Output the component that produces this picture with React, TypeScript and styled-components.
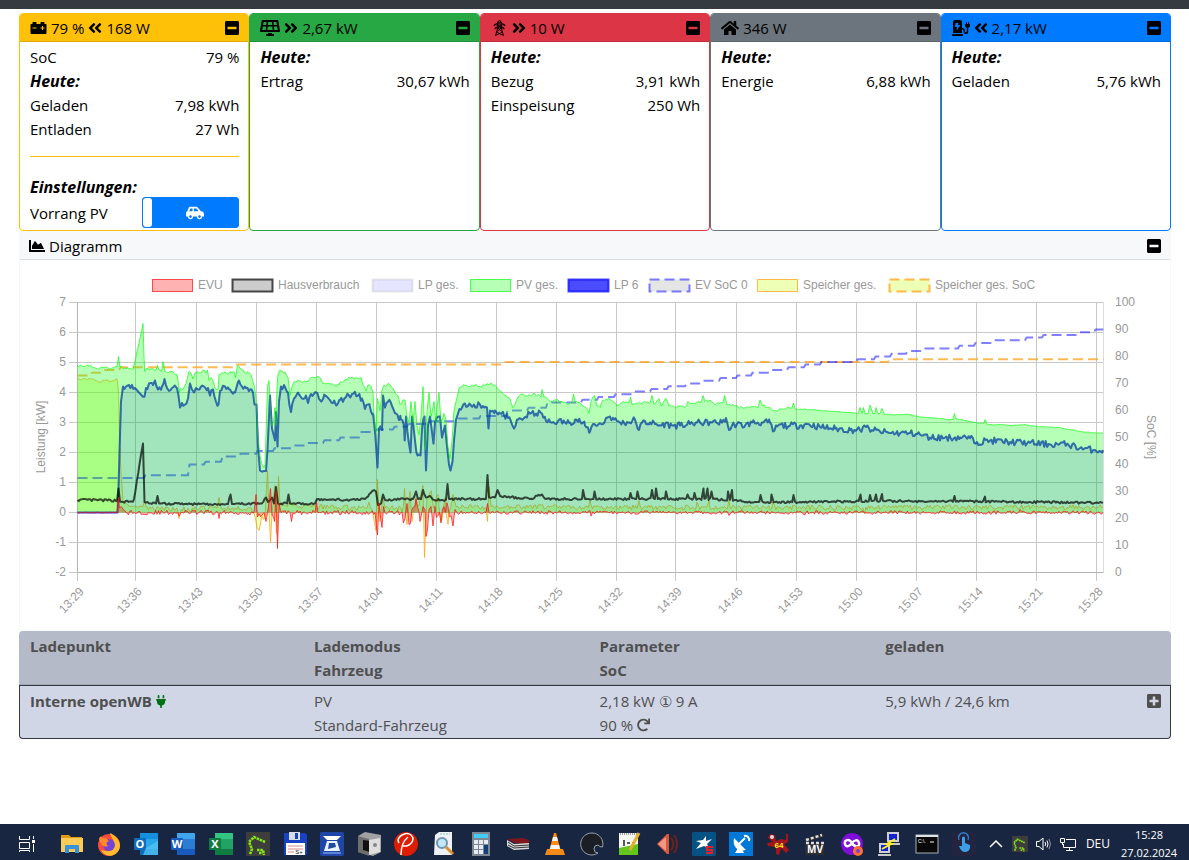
import React from "react";
import styled, { createGlobalStyle } from "styled-components";
import {
  FaAngleDoubleLeft,
  FaAngleDoubleRight,
  FaCarBattery,
  FaCarSide,
  FaChargingStation,
  FaChartArea,
  FaHome,
  FaMinusSquare,
  FaPlug,
  FaPlusSquare,
  FaRedo,
  FaSolarPanel,
} from "react-icons/fa";

const GlobalStyle = createGlobalStyle`
  *, *::before, *::after { box-sizing: border-box; }
  body {
    margin: 0;
    background: #fff;
    color: #000;
    font: 15px/24px "Segoe UI", "Open Sans", "Noto Sans", sans-serif;
  }
  button { border: 0; padding: 0; background: none; color: inherit; font: inherit; cursor: pointer; }
`;

const Page = styled.div`
  min-height: 100vh;
  display: flex;
  flex-direction: column;
`;

const NavBar = styled.header`
  height: 9px;
  background: #343a40;
`;

const Main = styled.main`
  padding: 4px 18px 24px 19px;
`;

const CardDeck = styled.section`
  display: grid;
  grid-template-columns: repeat(5, 1fr);
`;

const Card = styled.article<{ $tone: string }>`
  display: flex;
  flex-direction: column;
  border: 1px solid ${(p) => p.$tone};
  border-radius: 4px;
  overflow: hidden;
`;

const CardHeader = styled.header<{ $tone: string }>`
  display: flex;
  align-items: center;
  justify-content: space-between;
  height: 28px;
  padding: 0 9px 0 10px;
  background: ${(p) => p.$tone};
  border-bottom: 1px solid rgba(0, 0, 0, 0.125);
`;

const HeaderTitle = styled.div`
  display: flex;
  align-items: center;
  gap: 4px;
  white-space: nowrap;
`;

const Icon = styled.span<{ $w: number }>`
  display: inline-flex;
  svg {
    width: ${(p) => p.$w}px;
    height: 16px;
  }
`;

const CollapseButton = styled.button`
  display: flex;
  svg {
    width: 14px;
    height: 16px;
  }
`;

const CardBody = styled.div`
  padding: 3px 9px 2px 10px;
`;

const Line = styled.div`
  display: flex;
  justify-content: space-between;
  align-items: center;
`;

const Subheading = styled.h2<{ $tight?: boolean }>`
  margin: 0;
  font-size: 16px;
  line-height: ${(p) => (p.$tight ? 20 : 24)}px;
  font-weight: 700;
  font-style: italic;
`;

const Divider = styled.hr`
  margin: 15px 0 20px;
  border: 0;
  border-top: 1px solid #ffc107;
`;

const Toggle = styled.span`
  position: relative;
  display: flex;
  width: 97px;
  height: 31px;
  border: 1px solid #007bff;
  border-radius: 3px;
  background: #007bff;
  overflow: hidden;
  color: #fff;
  input {
    position: absolute;
    inset: 0;
    margin: 0;
    width: 100%;
    height: 100%;
    opacity: 0;
    cursor: pointer;
  }
`;

const ToggleHandle = styled.span`
  width: 9px;
  border-radius: 3px;
  background: #fff;
`;

const ToggleFace = styled.span`
  flex: 1;
  display: flex;
  align-items: center;
  justify-content: center;
`;

const ChartCard = styled.section`
  border: 1px solid #f7f7f7;
  border-top: 0;
`;

const ChartHeader = styled.header`
  display: flex;
  align-items: center;
  justify-content: space-between;
  height: 29px;
  padding: 2px 9px 0;
  background: #f7f8fa;
  border-bottom: 1px solid #dcdee0;
`;

const ChartSvg = styled.svg`
  display: block;
  width: 100%;
  height: auto;
  font: 12px "Liberation Sans", Arial, sans-serif;
  fill: #999;
`;

const PointTable = styled.table`
  width: 100%;
  table-layout: fixed;
  border-spacing: 0;
  color: #4f4f4f;
  text-align: left;
  th, td { vertical-align: top; padding: 3px 0 1px; }
  th:first-child, td:first-child { padding-left: 11px; width: 25.6%; }
  th { width: 24.8%; }
`;

const HeadRow = styled.tr`
  th {
    padding-bottom: 2px;
    background: #b5bac9;
    border-bottom: 1px solid #a3a7b5;
  }
  th:first-child { border-top-left-radius: 4px; }
  th:last-child { border-top-right-radius: 4px; }
`;

const PointRow = styled.tr`
  th, td {
    background: #d0d6e6;
    border-top: 1px solid #343a40;
    border-bottom: 1px solid #343a40;
  }
  && > :first-child { border-left: 1px solid #343a40; border-bottom-left-radius: 4px; padding-left: 10px; }
  && > :last-child { border-right: 1px solid #343a40; border-bottom-right-radius: 4px; padding-right: 9px; }
`;

const CellLine = styled.div`
  display: flex;
  align-items: center;
  gap: 4px;
`;

const SplitCell = styled.div`
  display: flex;
  justify-content: space-between;
  align-items: center;
`;

const PlugMark = styled.span`
  display: inline-flex;
  color: #006e12;
  svg { width: 10px; height: 13px; }
`;

const TaskBar = styled.footer`
  display: flex;
  align-items: center;
  height: 36px;
  margin-top: auto;
  padding: 4px 9px 0 15px;
  background: #192642;
  color: #fff;
  font-size: 12px;
`;

const AppList = styled.nav`
  flex: 0 1 916px;
  display: flex;
  justify-content: space-between;
  margin-left: 21px;
`;

const TaskButton = styled.button`
  display: flex;
  svg { width: 24px; height: 24px; }
`;

const Tray = styled.div`
  display: flex;
  align-items: center;
  gap: 8px;
  margin-left: auto;
`;

const TrayIcon = styled.button`
  display: flex;
  svg { width: 16px; height: 16px; }
`;

const Language = styled.span`
  margin-left: 2px;
`;

const Clock = styled.time`
  width: 62px;
  font-size: 11px;
  line-height: 18px;
  text-align: center;
`;

/* ---------- chart ---------- */

const LEFT = 77.5;
const RIGHT = 1103.5;
const TOP = 302.5;
const BOTTOM = 572.5;
const kwY = (v: number) => 512.5 - v * 30;
const socY = (v: number) => BOTTOM - v * 2.7;

const random = (seed: number) => {
  let s = seed;
  return () => {
    s = (s * 16807) % 2147483647;
    return s / 2147483647 - 0.5;
  };
};

// Samples arrive every ten seconds; flat pairs are x, kW.
const STEP = 1.43;
function samples(flat: number[], noise: number, seed: number, spikes: number[] = []) {
  const rnd = random(seed);
  const out: [number, number][] = [];
  for (let i = 0; i + 3 < flat.length; i += 2) {
    const [x0, y0, x1, y1] = flat.slice(i, i + 4);
    out.push([x0, y0]);
    for (let x = x0 + STEP; x < x1 - 0.7; x += STEP) {
      out.push([x, y0 + ((y1 - y0) * (x - x0)) / (x1 - x0) + rnd() * 2 * noise]);
    }
  }
  out.push([flat[flat.length - 2], flat[flat.length - 1]]);
  for (let i = 0; i < spikes.length; i += 2) {
    const near = out.reduce((b, p, k) => (Math.abs(p[0] - spikes[i]) < Math.abs(out[b][0] - spikes[i]) ? k : b), 0);
    out[near] = [spikes[i], spikes[i + 1]];
  }
  return out;
}
const toPath = (pts: [number, number][]) =>
  "M" + pts.map(([x, y]) => x.toFixed(1) + " " + kwY(y).toFixed(1)).join("L");
const toArea = (pts: [number, number][]) =>
  toPath(pts) + `L${pts[pts.length - 1][0]} ${kwY(0)}L${pts[0][0]} ${kwY(0)}Z`;

const pv = samples([
  77.5, 4.9, 82, 4.88, 90, 4.9, 93, 4.83, 98, 4.77, 103, 4.85, 108, 4.82, 111, 4.8, 117, 4.85, 118.5, 5.2, 120, 4.85,
  126, 4.8, 133, 4.77, 135.5, 5.1, 139, 5.65, 143, 6.3, 144, 5.2, 144.7, 4.7, 147, 4.8, 152, 4.8, 156, 4.75, 157.5, 4.9,
  159, 4.75, 161.5, 4.7, 163, 5.03, 165, 4.7, 168, 4.65, 171, 4.7, 174, 4.65, 177, 4.6, 178.5, 4.3, 179.5, 4, 180.5, 4.15,
  183, 4.1, 186, 4.3, 189, 4.7, 191, 4.65, 193, 4.45, 195, 4.65, 198, 4.7, 201, 4.65, 203, 4.75, 206, 4.65, 207.5, 4.75,
  209, 4.4, 211, 4.5, 213, 4.4, 215, 4.15, 218, 4.1, 219, 4.6, 222, 4.65, 225, 4.68, 228, 4.6, 230, 4.7, 232, 4.65,
  234, 4.7, 235.5, 4.5, 237.5, 4.9, 240, 4.8, 243, 4.75, 245, 4.65, 248, 4.7, 251, 4.6, 252.5, 4.4, 254.5, 4.2, 256, 3.8,
  257, 3.2, 258, 2.5, 260, 1.9, 262, 1.6, 264, 1.5, 265, 1.6, 266, 2.6, 267.5, 4.2, 269, 4.4, 270.5, 3.5, 271.5, 2.9,
  273.5, 3, 275, 3.5, 276, 2.9, 277, 4.2, 278, 4.6, 280, 4.75, 282, 4.7, 285, 4.68, 288, 4.5, 290, 3.9, 292, 4.2,
  294, 4.35, 298, 4.4, 303, 4.35, 308, 4.35, 311, 4.5, 320, 4.5, 323, 4.3, 327, 4.3, 332, 4.3, 336, 4.2, 341, 4.35,
  346, 4.45, 351, 4.5, 358, 4.48, 361, 4.5, 363, 4.25, 366, 4.05, 368, 4.25, 371, 4.2, 373, 4, 374, 3.3, 376, 2.7,
  377.5, 3.8, 380, 3.4, 382, 4.1, 384, 4.25, 386, 4.2, 388, 4.3, 391, 4.2, 395, 4, 398, 3.9, 400, 3.6, 403, 3.75,
  405, 3.75, 407, 3.2, 409, 3, 411, 3.7, 413, 3, 415, 3.7, 417, 2.9, 419, 2.6, 421, 3.2, 423, 4.2, 424.5, 2.8, 425.5, 2.1,
  427, 3.4, 429, 4, 431, 3.2, 434, 3.7, 436, 3, 437, 3.5, 439, 4, 441, 3, 444, 3.3, 446, 3.1, 448, 2.2, 450, 1.8,
  452, 2.4, 454, 3.4, 456, 3.7, 459, 4.15, 464, 4.25, 470, 4.2, 475, 4.25, 480, 4.2, 486, 4.25, 490, 4.3, 496, 4.2,
  498, 4.1, 502, 4, 506, 3.9, 510, 3.8, 513, 3.5, 515, 3.6, 518, 3.85, 522, 3.95, 526, 3.9, 530, 3.9, 535, 3.95,
  541, 3.85, 542, 4.1, 544, 3.85, 550, 3.7, 556, 3.75, 562, 3.7, 568, 3.6, 572, 3.7, 573.5, 3.95, 575, 3.7, 580, 3.65,
  586, 3.5, 589, 3.3, 591, 3.7, 594.5, 3.9, 597, 3.55, 600, 3.5, 603, 3.75, 609, 3.8, 613, 3.7, 617, 3.55, 623, 3.7,
  629, 3.65, 630.5, 3.85, 632, 3.6, 640, 3.65, 645, 3.7, 650, 3.65, 652, 3.9, 654, 3.6, 659, 3.8, 661, 3.55, 666, 3.8,
  669, 3.55, 675, 3.5, 679, 3.55, 685, 3.5, 688, 3.7, 692, 3.65, 698, 3.7, 701, 3.65, 703, 3.9, 705, 3.7, 710, 3.75,
  715, 3.6, 720, 3.65, 723, 3.65, 724.5, 3.9, 727, 3.6, 733, 3.6, 738, 3.5, 745, 3.5, 752, 3.55, 758, 3.5, 760, 3.75,
  763, 3.55, 770, 3.5, 775, 3.4, 785, 3.45, 792, 3.48, 793.5, 3.65, 795, 3.45,
], 0.04, 7).concat(samples([
  796, 3.45, 810, 3.43, 830, 3.38, 845, 3.34, 858, 3.3, 860, 3.5, 862, 3.3, 863.5, 3.5, 865, 3.3, 868, 3.3, 870, 3.58,
  873, 3.3, 875, 3.3, 876, 3.5, 878, 3.3, 880, 3.3, 882, 3.47, 884, 3.28, 892, 3.25, 908, 3.28, 920, 3.18, 935, 3.15,
  948, 3.1, 953, 3.1, 954.5, 3.3, 956, 3.12, 968, 3.05, 978, 2.98, 984, 2.97, 985, 3.1, 987, 2.93, 1000, 2.93,
  1012, 2.9, 1025, 2.93, 1035, 2.87, 1050, 2.85, 1060, 2.83, 1080, 2.7, 1095, 2.65, 1103, 2.65,
], 0.012, 9));

const lp = samples([77.5, 0, 117.5, 0], 0, 3).concat(samples([
  118.5, 0.8, 119.5, 2, 121, 3.7, 123, 4.2, 126, 4.2, 129, 4.25, 135, 4.15], 0.08, 4)).concat([[139, 4], [143, 3.86], [144.5, 3.86]], samples([
  146, 4.15, 149, 4.3, 153, 4.25, 155, 4.4, 158, 4.1, 162, 4.2, 164.5, 4.45, 167, 4.15, 169, 4.05, 172, 4.15, 177, 4.15,
  178.5, 3.9, 180, 3.5, 182, 3.65, 185, 3.6, 188, 3.8, 190, 4.3, 192, 4.1, 194, 4, 196, 4.15, 198, 4.1, 201, 4.2,
  204, 4.2, 208, 4.15, 210, 3.9, 213, 4.1, 216, 3.7, 218.5, 3.6, 220, 4.05, 225, 4.2, 230, 4.1, 235, 4, 239, 4.4,
  242, 4.2, 246, 4.15, 250, 4.1, 253, 4, 254.5, 3.6, 256.5, 3.6, 258, 2.2, 260, 1.4], 0.1, 5)).concat(samples([
  261, 1.38, 266, 1.38, 267.5, 2.1, 270, 3.9, 272, 2.8, 275, 2.4, 276, 3.35, 277.5, 2.2, 279, 3.7], 0.02, 5)).concat(samples([
  281, 4.2, 284, 4.25, 288, 4, 291, 3.35, 294, 3.8, 298, 4, 302, 3.8, 306, 3.9, 308, 3.65, 311, 3.95, 316, 4, 320, 3.75,
  325, 3.9, 330, 3.75, 335, 3.65, 340, 3.75, 346, 3.85, 352, 3.95, 358, 3.9, 362, 3.8, 365, 3.45, 368, 3.6, 373, 3.3,
  375.5, 2.5, 377.5, 1.5, 379, 2.8, 382, 2.75, 383, 3.9, 385, 3.5, 388, 3.7, 392, 3.55, 396, 3.3, 401, 3.1, 404, 2.9,
  404.7, 2.4, 406, 3.2, 408.5, 2.4, 410.5, 2, 412, 3.2, 415, 2.4, 417.5, 1.9, 420.5, 1.9, 422, 2.8, 424.5, 3.2, 426, 1.4,
  428, 2.9, 430, 3.2, 433.5, 2.3, 435, 3, 438, 3.2, 440, 3.2, 442, 2.5, 445, 2.9, 447, 2.2, 449, 1.6, 450.5, 1.4,
  452.5, 1.7, 454, 2.4, 456, 3.1, 458, 3.3, 462, 3.5, 468, 3.55, 474, 3.6, 480, 3.6, 483, 3.55, 487, 3.5, 488.5, 2.8,
  490, 3.4, 495, 3.4, 500, 3.3, 504, 3.25, 508, 3.15, 514, 2.8, 518, 3.1, 524, 3.15, 530, 3.3, 536, 3.3, 542, 3.3,
  546, 3.05, 552, 3, 558, 3.05, 565, 3, 570, 3, 575, 3.1, 580, 3.05, 585, 2.9, 590, 2.7, 593, 2.95, 603, 2.95,
  606, 3.15, 610, 3.2, 614, 3.1, 620, 3, 628, 3, 635, 3.1, 639, 2.75, 642, 3, 650, 3, 655, 2.95, 660, 2.9, 665, 2.95,
  672, 2.9, 680, 2.9, 690, 2.95, 700, 3, 712, 3, 722, 3, 726, 3.15, 729, 2.75, 734, 2.95, 745, 2.9, 752, 3, 762, 3,
  770, 3, 773, 2.7, 778, 2.9, 790, 2.9, 800, 2.9, 808, 2.95, 820, 2.85, 835, 2.8, 850, 2.75, 860, 2.75, 866, 2.85,
  872, 2.75, 880, 2.7, 890, 2.65, 910, 2.65, 920, 2.6, 930, 2.5, 945, 2.5, 960, 2.5, 970, 2.48, 977, 2.35, 990, 2.4,
  1010, 2.35, 1030, 2.32, 1050, 2.27, 1068, 2.28, 1080, 2.15, 1095, 2.08, 1103, 2.08,
], 0.11, 11));

const house = samples([
  77.5, 0.42, 117, 0.4, 118.5, 0.8, 120, 0.36, 133, 0.36,
], 0.04, 13).concat(samples([
  134, 0.45, 143, 2.3, 144.5, 0.35, 156, 0.3, 157.5, 0.55, 159, 0.3, 190, 0.28, 228, 0.28, 230.5, 0.6, 232, 0.28, 262, 0.3, 266, 0.5,
  268, 0.35, 272, 0.5, 274, 0.3, 276, 0.85, 278, 0.3, 287, 0.3, 288.5, 0.6, 290, 0.3, 315, 0.3, 317, 0.45, 350, 0.42, 365, 0.45,
  374, 0.75, 376, 0.7, 378, 0.25, 381, 0.3, 383, 0.6, 385, 0.42, 413, 0.45, 416, 0.7, 418, 0.45, 421, 0.45, 423, 0.75,
  426, 0.5, 430, 0.55, 434, 0.42, 446, 0.42, 447.5, 0.95, 449, 0.45, 486, 0.45, 487.5, 1.25, 489, 0.5, 495, 0.5,
  497.5, 0.75, 500, 0.55, 530, 0.45, 542, 0.6, 546, 0.45, 582, 0.45, 700, 0.45, 735, 0.42, 745, 0.34, 800, 0.35,
  880, 0.38, 980, 0.37, 1103, 0.32,
], 0.035, 15, [
  583, 0.75, 594.5, 0.7, 630.5, 0.65, 637.5, 0.7, 652, 0.75, 656, 0.8, 666, 0.7, 687.5, 0.6, 694.5, 0.65, 703.5, 0.8,
  707.5, 0.8, 711.5, 0.7, 728, 0.7, 732, 0.75, 760.5, 0.58, 771.5, 0.6, 793.5, 0.58, 860.5, 0.6, 870, 0.58, 876, 0.6,
  882, 0.62, 954.5, 0.55, 985, 0.53,
]));

const battery = samples([
  77.5, 4.5, 79, 4.44, 86, 4.45, 93, 4.45, 98, 4.35, 101, 4.33, 103, 4.42, 108, 4.4, 111, 4.37, 117, 4.45, 118.5, 4,
  119.5, 2.5, 121, 1.3, 123, 0.4, 130, 0.2, 143, 0.2, 144.5, 0.4, 146, 0.2], 0.02, 17).concat(samples([
  147, 0.2, 160, 0.1, 177, 0.15, 179, -0.2, 181, 0.1, 217, 0.15, 219, 0.5, 221, 0.15, 250, 0.15, 254, 0, 257, -0.5, 259, -0.6,
  262, -0.1, 265, -0.2, 267.5, 1.4, 270.5, -1, 272, 0, 275, 0.9, 276.5, -0.7, 278.5, 1.2, 280, 0.3, 300, 0.2, 367, 0.15,
  369, 0.35, 372, 0.1], 0.09, 19)).concat(samples([
  376, -0.6, 377.5, 1.1, 380, -0.3, 383, 0.5, 385, 0.15, 401, 0.15], 0.08, 21)).concat(samples([
  402, 0, 404.5, 0.8, 407, -0.4, 410, 0.7, 412, -0.3, 416, 0.5, 420, 0.4, 423, 0.9, 424.5, -1.5, 427, 0.5, 432, 0.5,
  435, 0.2, 438, 0.6, 441, -0.3, 445, 0.5, 448, -0.4, 451, 0.2, 453, 0.6, 456, 0.2], 0.25, 23)).concat(samples([
  458, 0.2, 486, 0.15, 487.5, -0.3, 489, 0.85, 491, 0.2, 600, 0.17, 850, 0.17, 1103, 0.18,
], 0.08, 25, [590, 0.4, 639, 0.4, 697, 0.35, 709, 0.4, 729, 0.4, 773, 0.35, 865, -0.03]));

const grid = samples([
  77.5, 0, 117, 0, 118.5, 0.5, 119.5, 0.15, 121, 0.2, 126, 0], 0.02, 27).concat(samples([
  127, 0, 178, 0, 179, -0.12, 181, 0, 218, 0, 219, -0.2, 220, 0, 254, 0, 256, 0.6, 257.5, -0.15, 264, 0, 266, -0.3,
  268, 0.1, 270.5, 0.8, 272, -0.1, 274.5, -0.3, 276, 0.7, 277.5, -1.2, 279, 0.3, 281, 0, 290, 0, 291.5, -0.3, 293, 0,
  315, 0, 316.5, 0.35, 318, 0, 375, 0, 377.5, -0.75, 379, 0.3, 382, -0.5, 383.5, 0.2, 385, 0, 401, 0], 0.08, 29)).concat(samples([
  402, 0, 405, -0.2, 407, 0.3, 409, -0.4, 412, 0.1, 416, 0.45, 420, -0.3, 423, 0.2, 425, 0.1, 426, -0.8, 429, 0.1,
  431, 0.2, 433, -0.45, 435, 0.2, 438, -0.1, 441, -0.35, 444, 0.2, 448, 0.2, 451, -0.1, 453, -0.45, 455, 0.1], 0.25, 31)).concat(samples([
  457, 0, 486, 0, 487.5, 0.3, 489, 0, 500, 0, 700, 0, 1103, 0,
], 0.06, 33, [591, -0.12, 729, -0.1, 805, -0.08, 1020, 0.1]));

// x where each state of charge begins, followed by its per cent value
const evSoc = [
  77.5, 35, 144, 36, 188, 40, 204, 41, 221, 43, 239, 44, 256, 45, 273, 46, 290, 47, 306, 48, 323, 49, 339, 50, 359, 52,
  375, 53, 393, 54, 407, 55, 429, 56, 457, 57, 479, 58, 506, 60, 527, 61, 546, 63, 581, 64, 597, 65, 614, 66, 633, 67,
  650, 68, 667, 69, 685, 70, 702, 71, 719, 72, 736, 73, 751, 74, 770, 75, 787, 76, 804, 77, 820, 78, 856, 79, 874, 80,
  890, 81, 906, 82, 922, 83, 958, 84, 974, 85, 992, 86, 1025, 87, 1042, 88, 1077, 89, 1094, 90,
];
const batSoc = [77.5, 73, 88, 74, 101, 75, 119, 76, 233, 77, 503, 78, 888, 79];
const stepPath = (s: number[]) => {
  let d = `M${s[0]} ${socY(s[1])}`;
  for (let i = 2; i < s.length; i += 2) d += `L${s[i]} ${socY(s[i - 1])}L${s[i] + 1.5} ${socY(s[i + 1])}`;
  return d + `L${RIGHT} ${socY(s[s.length - 1])}`;
};

const legend = [
  { x: 152, label: "EVU", fill: "rgba(255,0,0,.3)", stroke: "rgba(255,10,13,.7)", w: 1 },
  { x: 232, label: "Hausverbrauch", fill: "rgba(0,0,0,.2)", stroke: "rgba(0,0,0,.7)", w: 2 },
  { x: 372, label: "LP ges.", fill: "rgba(0,0,255,.1)", stroke: "rgba(0,0,0,.08)", w: 2 },
  { x: 470, label: "PV ges.", fill: "rgba(10,255,13,.3)", stroke: "rgba(10,255,13,.7)", w: 1 },
  { x: 568, label: "LP 6", fill: "rgba(0,0,255,.7)", stroke: "rgba(0,0,255,.7)", w: 2 },
  { x: 649, label: "EV SoC 0", fill: "rgba(0,0,0,.1)", stroke: "rgba(0,0,255,.5)", w: 2, dash: "10 5" },
  { x: 757, label: "Speicher ges.", fill: "rgba(200,255,13,.3)", stroke: "rgba(255,155,13,.7)", w: 1 },
  { x: 889, label: "Speicher ges. SoC", fill: "rgba(200,255,13,.3)", stroke: "rgba(255,155,13,.7)", w: 2, dash: "10 5" },
];

const ticks: [number, string][] = [
  [77.5, "13:29"], [135.5, "13:36"], [196.5, "13:43"], [256.5, "13:50"], [316.5, "13:57"], [376.5, "14:04"],
  [436.5, "14:11"], [496.5, "14:18"], [556.5, "14:25"], [616.5, "14:32"], [675.5, "14:39"], [736.5, "14:46"],
  [796.5, "14:53"], [856.5, "15:00"], [916.5, "15:07"], [976.5, "15:14"], [1036.5, "15:21"], [1096.5, "15:28"],
];

function PowerChart() {
  return (
    <ChartSvg viewBox="20 260 1150 370" role="img" aria-label="Leistung und SoC im Tagesverlauf">
      {legend.map((l) => (
        <g key={l.label}>
          <rect x={l.x + 0.5} y="279.5" width="40" height="12" fill={l.fill} stroke={l.stroke} strokeWidth={l.w} strokeDasharray={l.dash} />
          <text x={l.x + 46} y="289">{l.label}</text>
        </g>
      ))}
      <g stroke="#c8c8c8" fill="none">
        {[7, 6, 5, 4, 3, 2, 1, 0, -1, -2].map((v) => (
          <path key={v} d={`M69 ${kwY(v)}H${RIGHT}`} />
        ))}
        {ticks.map(([x]) => (
          <path key={x} d={`M${x} ${TOP}V581`} />
        ))}
        <path d={`M${RIGHT} ${TOP}V${BOTTOM}`} stroke="#ddd" />
        <path d={`M${LEFT} ${TOP}V${BOTTOM}H${RIGHT}`} stroke="#b4b4b4" />
      </g>
      {[7, 6, 5, 4, 3, 2, 1, 0, -1, -2].map((v) => (
        <text key={v} x="66" y={kwY(v) + 3.5} textAnchor="end">{v}</text>
      ))}
      {[0, 10, 20, 30, 40, 50, 60, 70, 80, 90, 100].map((v) => (
        <text key={v} x="1115" y={socY(v) + 3.5}>{v}</text>
      ))}
      {ticks.map(([x, t]) => (
        <text key={t} textAnchor="end" transform={`translate(${x + 7} 592) rotate(-47)`}>{t}</text>
      ))}
      <text textAnchor="middle" transform="translate(45 437) rotate(-90)">Leistung [kW]</text>
      <text textAnchor="middle" transform="translate(1147 437) rotate(90)">SoC [%]</text>

      <g fill="none" strokeLinejoin="round">
        <path d={stepPath(batSoc)} stroke="rgba(255,155,13,.7)" strokeWidth="2" strokeDasharray="10 5" />
        <path d={toArea(battery)} fill="rgba(200,255,13,.3)" />
        <path d={toPath(battery)} stroke="rgba(255,155,13,.7)" />
        <path d={stepPath(evSoc)} stroke="rgba(0,0,255,.5)" strokeWidth="2" strokeDasharray="10 5" />
        <path d={toPath(lp)} stroke="rgba(0,0,255,.7)" strokeWidth="2" />
        <path d={toArea(pv)} fill="rgba(10,255,13,.3)" />
        <path d={toPath(pv)} stroke="rgba(10,255,13,.7)" />
        <path d={toArea(lp)} fill="rgba(0,0,255,.1)" />
        <path d={toPath(lp)} stroke="rgba(0,0,0,.1)" strokeWidth="2" />
        <path d={toPath(house)} stroke="rgba(0,0,0,.7)" strokeWidth="2" />
        <path d={toArea(grid)} fill="rgba(255,0,0,.3)" />
        <path d={toPath(grid)} stroke="rgba(255,10,13,.7)" />
      </g>
    </ChartSvg>
  );
}

/* ---------- top cards ---------- */

const Pylon = () => (
  <svg viewBox="0 0 14 18" fill="none" stroke="currentColor" strokeWidth="1">
    <path d="M5 5V2L7 .5 9 2V5M5 2.5H9M1 7V5.5L5 3.5H9L13 5.5V7M1 5.5H13M2 10.5V9L5 7.5H9L12 9V10.5M2 9H12M5 5V9L2.500 17.500M9 5V9L11.500 17.500M5 5L9 9M9 5L5 9M5 9L10.500 13.500M9 9L3.500 13.500M3.500 13.500L11.500 17.500M10.500 13.500L2.500 17.500" />
  </svg>
);

interface MeterProps {
  tone: string;
  icon: React.ReactNode;
  iconWidth: number;
  state?: string;
  flow?: "in" | "out";
  power: string;
  children: React.ReactNode;
}

function MeterCard({ tone, icon, iconWidth, state, flow, power, children }: MeterProps) {
  return (
    <Card $tone={tone}>
      <CardHeader $tone={tone}>
        <HeaderTitle>
          <Icon $w={iconWidth}>{icon}</Icon>
          {state && <span>{state}</span>}
          {flow && <Icon $w={14}>{flow === "in" ? <FaAngleDoubleLeft /> : <FaAngleDoubleRight />}</Icon>}
          <span>{power}</span>
        </HeaderTitle>
        <CollapseButton aria-label="Einklappen"><FaMinusSquare /></CollapseButton>
      </CardHeader>
      <CardBody>{children}</CardBody>
    </Card>
  );
}

const Value = ({ name, value }: { name: string; value: string }) => (
  <Line><span>{name}</span><span>{value}</span></Line>
);

/* ---------- task bar ---------- */

const office = (dark: string, mid: string, light: string, letter: string) => (
  <>
    <rect x="6" y="1" width="18" height="22" rx="1" fill={mid} />
    <path d="M6 1H23a1 1 0 0 1 1 1V7H6z" fill={light} />
    <path d="M6 17H24V22a1 1 0 0 1-1 1H6z" fill={dark} />
    <rect x="0" y="6" width="12" height="12" rx="1" fill={dark} />
    <text x="6" y="16" fontSize="11" fontWeight="700" fill="#fff" textAnchor="middle" fontFamily="Open Sans, sans-serif">{letter}</text>
  </>
);

const greenTrace = (
  <>
    <rect width="24" height="24" fill="#3d3d3b" />
    <path d="M19 10L8 5 3 10 6 17 4 22M11 18H17L18 23M13 21H17" fill="none" stroke="#83e813" strokeWidth="2.500" strokeDasharray="2.500 .8" />
  </>
);

const apps: [string, React.ReactNode][] = [
  ["Explorer", <>
    <path d="M1 3H9L11 5H22V8H1z" fill="#e09a10" /><path d="M1 6H23V20H1z" fill="#fccb57" />
    <path d="M5 14a1 1 0 0 1 1-1H18a1 1 0 0 1 1 1V21H15V17H9V21H5z" fill="#3892da" />
  </>],
  ["Firefox", <>
    <circle cx="12" cy="13" r="11" fill="#fc4a3c" /><path d="M13 1C17 3 23 7 23 14a10 10 0 0 1-19 4C10 20 16 20 17 14 18 8 14 6 13 1z" fill="#ffbd2e" />
    <circle cx="12" cy="13" r="6" fill="#7544d4" /><path d="M2 7C3 4 5 4 5 6C9 5 11 7 12 10C9 9 9 12 11 14 6 16 4 12 2 7z" fill="#ff8a2b" />
  </>],
  ["Outlook", <>{office("#0f6cbd", "#28a8ea", "#1490df", "O")}<path d="M12 16L24 9V23H9z" fill="#50c4f4" opacity=".8" /></>],
  ["Word", office("#185abd", "#2b7cd3", "#41a5ee", "W")],
  ["Excel", office("#107c41", "#21a366", "#33c481", "X")],
  ["Signal", greenTrace],
  ["Diskette", <>
    <path d="M1 1H22L24 3V23H1z" fill="#1842c5" /><rect x="6" y="0" width="11" height="8" fill="#d9dde6" /><rect x="12" y="1" width="3" height="6" fill="#1842c5" />
    <rect x="3" y="11" width="19" height="12" fill="#fff" /><path d="M5 14H20M5 17H20M5 20H11" stroke="#e08a8a" />
    <text x="16" y="22" fontSize="6" fill="#222" textAnchor="middle">S+</text>
  </>],
  ["Waage", <>
    <rect width="24" height="24" rx="2" fill="#1f45a8" /><path d="M3 4H21L17 8H7z" fill="#fff" /><path d="M7 9H17L20 19H4z" fill="#e9f2ff" /><path d="M9 11H15L16 15 8 17z" fill="#214a9e" /><path d="M3 21H21" stroke="#9dc0ff" />
  </>],
  ["Tresor", <>
    <path d="M1 4L8 0 24 3V20L16 24 1 20z" fill="#a2a2a2" /><path d="M1 4L12 7V24L1 20z" fill="#6e6e6e" /><path d="M6 8L13 9V20L6 18z" fill="#111" /><path d="M12 8L23 6V20L12 23z" fill="#dedede" /><circle cx="18" cy="13" r="2" fill="#888" />
  </>],
  ["P-Tool", <>
    <circle cx="12" cy="12" r="12" fill="#dd1c00" /><path d="M7 23C7 15 9 9 14 5M5 11C1 5 12-1 17 3 22 8 16 15 9 14" fill="none" stroke="#fff" strokeWidth="1.500" />
  </>],
  ["Suche", <>
    <path d="M3 3L7 0H20V23H2z" fill="#eef2f6" /><path d="M8 2H18" stroke="#8cb" strokeDasharray="2 1" /><circle cx="10" cy="11" r="5" fill="#c2e8f7" stroke="#6f96ad" strokeWidth="2" />
    <path d="M14 15L21 22" stroke="#d99031" strokeWidth="3" />
  </>],
  ["Rechner", <>
    <rect x="3" width="18" height="24" fill="#7c8793" /><rect x="5" y="2" width="14" height="4" fill="#43cdf5" />
    <path d="M5 8H9V12H5zM10 8H14V12H10zM15 8H19V12H15zM5 13H9V17H5zM10 13H14V17H10zM5 18H9V22H5zM10 18H14V22H10z" fill="#e6ebef" /><path d="M15 13H19V22H15z" fill="#103f7c" />
  </>],
  ["Archiv", <>
    <path d="M1 7L17 6 23 8V12L9 11z" fill="#80151c" /><path d="M1 8L8 12 23 11V17L8 18 1 14z" fill="#d9d9d9" /><path d="M2 10L8 14 23 13M2 13L8 16 23 15" stroke="#333" fill="none" />
  </>],
  ["VLC", <>
    <path d="M4 17H20L22 23H2z" fill="#f18a1c" /><path d="M11 1H13L18 19Q12 22 6 19z" fill="#ff8a14" /><path d="M10 5H14L15 9H9zM8 13H16L17 17H7z" fill="#f3f3f3" />
  </>],
  ["Rekorder", <path d="M12 1a11 11 0 1 0 6 20 4 4 0 0 1 0-8 5 5 0 0 0 4.500 2A11 11 0 0 0 12 1z" fill="#1b1e24" stroke="#99a0aa" strokeWidth="1" />],
  ["Notepad++", <>
    <path d="M2 1H21V23H2z" fill="#f4f7ef" /><path d="M2 16L21 12V23H2z" fill="#65c51d" /><path d="M3 2H20" stroke="#99a" strokeDasharray="1 1" strokeWidth="2" /><path d="M7 8V14M10 11H13M15 11H18" stroke="#223" strokeWidth="1.500" />
    <path d="M22 1L13 18" stroke="#e7ae2c" strokeWidth="3" />
  </>],
  ["Lautsprecher", <>
    <path d="M2 12L12 2H14V22H12z" fill="#d95740" /><path d="M3 12L11 5V19z" fill="#f09980" /><path d="M16 6C19 9 19 15 16 18M19 3C23 8 23 16 19 21" fill="none" stroke="#69241f" strokeWidth="2" />
  </>],
  ["Sparkasse", <>
    <rect width="24" height="24" rx="2" fill="#055385" /><path d="M4 17L9 11 4 9 11 8 14 4 14 9 20 7 15 12 17 16 12 14z" fill="#fff" /><path d="M21 15H15V18H20V21H14" fill="none" stroke="#ee1b22" strokeWidth="2" />
  </>],
  ["Satellit", <>
    <rect width="24" height="24" fill="#0078d7" /><path d="M5 6C3 16 10 20 17 18z" fill="#fff" /><path d="M9 16L6 21H15L13 17" fill="#fff" /><path d="M10 12L16 6M15 4a4 4 0 0 1 5 5" stroke="#fff" strokeWidth="2" fill="none" />
  </>],
  ["C64", <>
    <path d="M4 2L9 3 10 9 15 7 20 8V2H22V10L18 12 23 18 20 21 15 16 13 23 10 22 10 15 2 14 1 11 7 10 2 6z" fill="#a4141b" /><circle cx="6" cy="5" r="2" fill="#ddd" />
    <text x="13" y="16" fontSize="8" fontWeight="700" fill="#ffee20" textAnchor="middle">64</text>
  </>],
  ["MediathekView", <>
    <path d="M2 11H21V23H2z" fill="#2b2d31" /><path d="M2 7L20 1 21 5 3 10z" fill="#2b2d31" /><path d="M3 8L19 3M3 11H21" stroke="#ddd" strokeWidth="2.500" strokeDasharray="3 2" />
    <text x="12" y="21" fontSize="10" fontWeight="700" fill="#fff" textAnchor="middle" fontFamily="Open Sans, sans-serif">MV</text>
  </>],
  ["Firefox Privat", <>
    <circle cx="12" cy="12" r="11" fill="#7e0fd8" /><path d="M12 11C9 6 4 8 5 12 6 16 10 14 12 11 14 8 18 7 19 11 20 15 15 16 12 11z" fill="none" stroke="#fff" strokeWidth="2.500" />
    <circle cx="18" cy="19" r="5" fill="#ff7030" /><circle cx="18" cy="19" r="2" fill="#7544d4" />
  </>],
  ["PuTTY", <>
    <path d="M11 1H21V9H11zM3 12H12V20H3z" fill="#1122d4" stroke="#d0d0d0" strokeWidth="2" /><path d="M10 12H23M1 23H14" stroke="#c7c7c7" strokeWidth="2" /><path d="M18 7L10 12H14L5 17" stroke="#ffee20" strokeWidth="2" fill="none" />
  </>],
  ["Eingabeaufforderung", <>
    <rect x="1" y="3" width="22" height="18" fill="#090909" stroke="#a8b0b7" /><path d="M1 4H23" stroke="#dce2e6" strokeWidth="2" /><text x="3" y="11" fontSize="5" fill="#fff">C:\.</text><path d="M15 10H19" stroke="#fff" />
  </>],
  ["Touch", <>
    <rect width="24" height="24" rx="3" fill="#222440" /><path d="M10 6a1.500 1.500 0 0 1 3 0V11L18 13V16Q17 20 13 20 9 20 7 14L10 14z" fill="#3f9fe4" /><path d="M7 8a5 5 0 1 1 9 0" fill="none" stroke="#2c83cb" strokeWidth="1.500" />
  </>],
];

export default function App() {
  return (
    <Page>
      <GlobalStyle />
      <NavBar />
      <Main>
        <CardDeck>
          <MeterCard tone="#ffc107" icon={<FaCarBattery />} iconWidth={17} state="79 %" flow="in" power="168 W">
            <Value name="SoC" value="79 %" />
            <Subheading>Heute:</Subheading>
            <Value name="Geladen" value="7,98 kWh" />
            <Value name="Entladen" value="27 Wh" />
            <Divider />
            <Subheading $tight>Einstellungen:</Subheading>
            <Line>
              <label htmlFor="pv-priority">Vorrang PV</label>
              <Toggle>
                <ToggleHandle />
                <ToggleFace><Icon $w={18}><FaCarSide /></Icon></ToggleFace>
                <input id="pv-priority" type="checkbox" defaultChecked />
              </Toggle>
            </Line>
          </MeterCard>
          <MeterCard tone="#28a745" icon={<FaSolarPanel />} iconWidth={20} flow="out" power="2,67 kW">
            <Subheading>Heute:</Subheading>
            <Value name="Ertrag" value="30,67 kWh" />
          </MeterCard>
          <MeterCard tone="#dc3545" icon={<Pylon />} iconWidth={17} flow="out" power="10 W">
            <Subheading>Heute:</Subheading>
            <Value name="Bezug" value="3,91 kWh" />
            <Value name="Einspeisung" value="250 Wh" />
          </MeterCard>
          <MeterCard tone="#6c757d" icon={<FaHome />} iconWidth={18} power="346 W">
            <Subheading>Heute:</Subheading>
            <Value name="Energie" value="6,88 kWh" />
          </MeterCard>
          <MeterCard tone="#007bff" icon={<FaChargingStation />} iconWidth={18} flow="in" power="2,17 kW">
            <Subheading>Heute:</Subheading>
            <Value name="Geladen" value="5,76 kWh" />
          </MeterCard>
        </CardDeck>

        <ChartCard>
          <ChartHeader>
            <HeaderTitle><Icon $w={16}><FaChartArea /></Icon><span>Diagramm</span></HeaderTitle>
            <CollapseButton aria-label="Diagramm einklappen"><FaMinusSquare /></CollapseButton>
          </ChartHeader>
          <PowerChart />
        </ChartCard>

        <PointTable>
          <thead>
            <HeadRow>
              <th scope="col">Ladepunkt</th>
              <th scope="col">Lademodus<br />Fahrzeug</th>
              <th scope="col">Parameter<br />SoC</th>
              <th scope="col">geladen</th>
            </HeadRow>
          </thead>
          <tbody>
            <PointRow>
              <th scope="row"><CellLine>Interne openWB <PlugMark><FaPlug /></PlugMark></CellLine></th>
              <td>PV<br />Standard-Fahrzeug</td>
              <td>
                <CellLine>2,18 kW ① 9 A</CellLine>
                <CellLine>90 % <Icon $w={13}><FaRedo /></Icon></CellLine>
              </td>
              <td>
                <SplitCell>
                  <span>5,9 kWh / 24,6 km</span>
                  <CollapseButton aria-label="Details anzeigen"><FaPlusSquare /></CollapseButton>
                </SplitCell>
              </td>
            </PointRow>
          </tbody>
        </PointTable>
      </Main>

      <TaskBar>
        <TaskButton aria-label="Taskansicht">
          <svg viewBox="0 0 24 24" fill="none" stroke="#fff">
            <path d="M4.500 4V7.500H14.500V4M4.500 10.500H14.500V16.500H4.500zM4.500 20V18.500H14.500V20M18.500 4V7M18.500 12V20" />
            <path d="M17 8H20V11H17z" fill="#fff" stroke="none" />
          </svg>
        </TaskButton>
        <AppList aria-label="Programme">
          {apps.map(([name, art]) => (
            <TaskButton key={name} aria-label={name}>
              <svg viewBox="0 0 24 24" fontFamily="Liberation Sans, sans-serif">{art}</svg>
            </TaskButton>
          ))}
        </AppList>
        <Tray>
          <TrayIcon aria-label="Ausgeblendete Symbole">
            <svg viewBox="0 0 16 16" fill="none" stroke="#fff"><path d="M2 11L8 5 14 11" strokeWidth="1.500" /></svg>
          </TrayIcon>
          <TrayIcon aria-label="Signal"><svg viewBox="0 0 24 24">{greenTrace}</svg></TrayIcon>
          <TrayIcon aria-label="Lautstärke">
            <svg viewBox="0 0 16 16" fill="none" stroke="#fff"><path d="M.5 5.500H3L7 2V14L3 10.500H.5zM9 6Q10.500 8 9 10M11 4.500Q13 8 11 11.500" /><path d="M13 3Q16 8 13 13" opacity=".5" /></svg>
          </TrayIcon>
          <TrayIcon aria-label="Netzwerk">
            <svg viewBox="0 0 16 16" fill="none" stroke="#fff"><path d="M6 3.500H15.500V11.500H3.500V8M9.500 12V14.500M6 14.500H13M.5 2.500H4.500V6.500H.5zM2.500 6.500V9" /></svg>
          </TrayIcon>
          <Language>DEU</Language>
          <Clock>15:28<br />27.02.2024</Clock>
        </Tray>
      </TaskBar>
    </Page>
  );
}
